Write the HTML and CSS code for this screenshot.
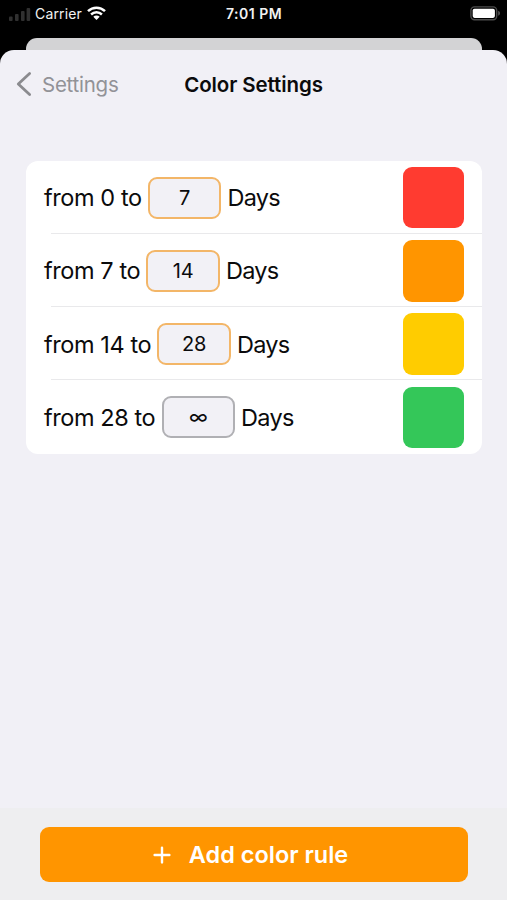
FILE: index.html
```html
<!DOCTYPE html>
<html lang="en">
<head>
<meta charset="utf-8">
<title>Color Settings</title>
<link rel="stylesheet" href="styles.css">
</head>
<body>
<header class="status">
  <div class="status-left">
    <svg class="signal" width="22" height="14" viewBox="0 0 22 14"><rect x="0" y="9.5" width="3.6" height="4.5" rx="1"/><rect x="6" y="7" width="3.6" height="7" rx="1"/><rect x="12" y="4" width="3.6" height="10" rx="1"/><rect x="17.6" y="1" width="3.6" height="13" rx="1"/></svg>
    <span class="carrier">Carrier</span>
    <svg class="wifi" width="19" height="14" viewBox="0 0 19 14"><g fill="none" stroke="#fff" stroke-width="2.5"><path d="M1 5.1a12.2 12.2 0 0 1 17 0"/><path d="M4.1 8.5a7.8 7.8 0 0 1 10.8 0"/></g><path fill="#fff" d="M9.5 14 6.3 10.8a4.5 4.5 0 0 1 6.4 0z"/></svg>
  </div>
  <span class="time">7:01 PM</span>
  <svg class="battery" width="31" height="15" viewBox="0 0 31 15"><rect x=".9" y=".9" width="25.8" height="12.8" rx="3.6" fill="none" stroke="#4c4c4c" stroke-width="1.4"/><rect x="2.7" y="2.7" width="22.2" height="9.2" rx="1.8" fill="#fff"/><path d="M28.2 4.8c2.4.8 2.4 4.2 0 5z" fill="#555"/></svg>
</header>
<div class="sheet-behind"></div>
<main class="sheet">
  <nav class="nav">
    <div class="back"><svg width="16" height="26" viewBox="0 0 16 26"><path d="M13.6 2.5 2.3 13l11.3 10.5" fill="none" stroke="#8b8b8f" stroke-width="2.8" stroke-linecap="round" stroke-linejoin="round"/></svg><span class="back-label">Settings</span></div>
    <h1 class="title">Color Settings</h1>
  </nav>
  <section class="rules">
    <div class="rule"><span class="from">from 0 to</span><span class="field">7</span><span class="unit">Days</span><i class="swatch red"></i></div>
    <div class="rule"><span class="from">from 7 to</span><span class="field">14</span><span class="unit">Days</span><i class="swatch orange"></i></div>
    <div class="rule"><span class="from">from 14 to</span><span class="field">28</span><span class="unit">Days</span><i class="swatch yellow"></i></div>
    <div class="rule"><span class="from">from 28 to</span><span class="field locked">∞</span><span class="unit">Days</span><i class="swatch green"></i></div>
  </section>
  <footer class="footer">
    <button class="add"><svg width="18" height="18" viewBox="0 0 18 18"><path d="M9 1.6v14.8M1.6 9h14.8" stroke="#fff" stroke-width="2.4" stroke-linecap="round"/></svg><span class="add-label">Add color rule</span></button>
  </footer>
</main>
</body>
</html>
```

FILE: styles.css
```css
* { box-sizing: border-box; }

body {
  margin: 0;
  height: 900px;
  display: flex;
  flex-direction: column;
  background: #000;
  color: #0b0b0c;
  font-family: Inter, "Liberation Sans", sans-serif;
  overflow: hidden;
}

.status {
  display: grid;
  grid-template-columns: 1fr auto 1fr;
  align-items: center;
  height: 27px;
  margin-bottom: 11px;
  padding: 0 8px 0 9px;
  color: #f2f2f2;
}

.status-left { display: flex; align-items: center; }
.signal { fill: #303030; margin-right: 4px; }
.carrier { width: 47px; font-size: 14px; letter-spacing: 0.15px; white-space: nowrap; }
.wifi { margin-left: 5px; margin-top: -2px; }
.time { font-size: 14px; font-weight: 600; letter-spacing: 0.5px; }
.battery { justify-self: end; margin-right: -2px; margin-top: -1px; }

.sheet-behind {
  flex: none;
  height: 12px;
  margin: 0 25px 0 26px;
  border-radius: 11px 11px 0 0;
  background: #d3d3d5;
}

.sheet {
  flex: 1;
  display: flex;
  flex-direction: column;
  border-radius: 14px 14px 0 0;
  background: #f1f0f6;
}

.nav {
  display: grid;
  grid-template-columns: 1fr auto 1fr;
  align-items: center;
  height: 68px;
  padding: 0 16px;
}

.back { display: flex; align-items: center; gap: 10px; color: #929297; }
.back-label { font-size: 20.5px; letter-spacing: -0.25px; }
.title { margin: 0; font-size: 20.5px; font-weight: 600; letter-spacing: -0.1px; }

.rules {
  margin: 43px 25px 0 26px;
  border-radius: 12px;
  background: #fff;
}

.rule {
  display: flex;
  align-items: center;
  height: 73.25px;
  padding: 0 18px;
  font-size: 23.5px;
  letter-spacing: -0.42px;
  background: linear-gradient(#e9e9eb, #e9e9eb) 25px 100% / 100% 1.3px no-repeat;
}
.rule:last-child { background: none; }

.unit { letter-spacing: -0.7px; }

.field {
  display: flex;
  align-items: center;
  justify-content: center;
  width: 73.5px;
  height: 42px;
  margin: 0 6px 0 6.3px;
  border: 2px solid #f3b668;
  border-radius: 9px;
  background: #f2f1f6;
  font-size: 20px;
  letter-spacing: 0;
}
.locked { border-color: #b0b0b4; }

.swatch {
  width: 61.5px;
  height: 61.5px;
  margin-left: auto;
  border-radius: 9px;
}
.red { background: #ff3b30; }
.orange { background: #ff9500; }
.yellow { background: #ffcc00; }
.green { background: #34c759; }

.footer {
  height: 92px;
  margin-top: auto;
  padding: 19px 39px 0 40px;
  background: #eeeef0;
}

.add {
  display: flex;
  align-items: center;
  justify-content: center;
  gap: 18px;
  width: 100%;
  height: 55px;
  padding: 0 7px 0 0;
  border: 0;
  border-radius: 9px;
  background: #ff9500;
  color: #fff;
  font: 600 23.5px Inter, "Liberation Sans", sans-serif;
}
```
